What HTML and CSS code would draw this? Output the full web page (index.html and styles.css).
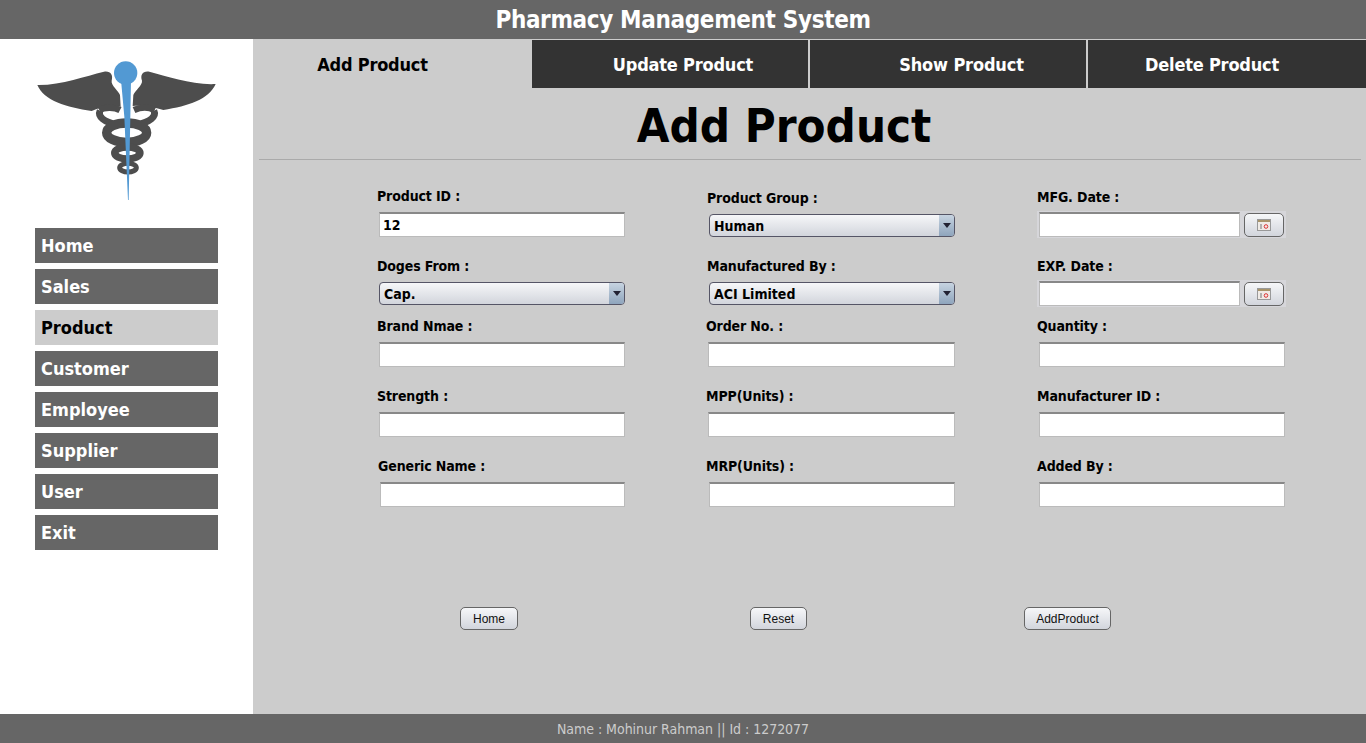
FILE: index.html
```html
<!DOCTYPE html>
<html lang="en-us">
  <head>
    <meta charset="utf-8">
    <meta name="viewport" content="width=device-width">
    <title>Pharmacy Management System</title>
    <link rel="stylesheet" href="styles.css">
  </head>
  <body>
    <header class="topbar">Pharmacy Management System</header>
    <div class="layout">
      <aside class="sidebar">
        <svg class="logo" viewBox="0 0 630 480" aria-hidden="true">
          <path class="dark" d="M52 105C125 106 195 78 252 65C272 62 280 75 275 92C272 106 296 122 300 135L302 170C270 164 240 172 215 183C140 172 72 152 52 105Z"/>
          <path class="dark" d="M587 102C520 106 440 78 388 65C368 62 360 75 366 92C368 106 344 122 340 135L338 168C370 164 405 172 430 180C505 168 567 148 587 102Z"/>
          <g class="coil">
            <path d="M240 182C232 200 252 216 290 224"/>
            <path d="M402 182C410 200 390 216 352 224"/>
            <path d="M238 180C255 170 285 172 300 180"/>
            <path d="M404 180C385 170 360 172 342 180"/>
            <ellipse cx="320" cy="248" rx="60" ry="29"/>
            <ellipse class="mid" cx="322" cy="309" rx="38" ry="18"/>
            <ellipse class="low" cx="324" cy="353" rx="25" ry="13"/>
          </g>
          <circle class="blue" cx="317" cy="69" r="35"/>
          <path class="blue" d="M303 90H333L331 200L326 450H324L313 200Z"/>
        </svg>
        <nav class="menu">
          <a class="menu-item">Home</a>
          <a class="menu-item">Sales</a>
          <a class="menu-item active">Product</a>
          <a class="menu-item">Customer</a>
          <a class="menu-item">Employee</a>
          <a class="menu-item">Supplier</a>
          <a class="menu-item">User</a>
          <a class="menu-item">Exit</a>
        </nav>
      </aside>
      <main class="content">
        <div class="tabs">
          <a class="tab active">Add Product</a>
          <a class="tab">Update Product</a>
          <a class="tab">Show Product</a>
          <a class="tab">Delete Product</a>
        </div>
        <h1 class="page-title">Add Product</h1>
        <form class="product-form">
          <div class="field">
            <label>Product ID :</label>
            <input class="text-input" type="text" value="12">
          </div>
          <div class="field drop-2">
            <label>Product Group :</label>
            <div class="combo">
              <select><option>Human</option></select>
              <span class="combo-arrow"></span>
            </div>
          </div>
          <div class="field drop-1">
            <label>MFG. Date :</label>
            <div class="date-field">
              <input class="text-input" type="text">
              <button class="date-btn" type="button"><svg viewBox="0 0 14 12"><rect x="0.5" y="0.5" width="13" height="11" fill="#f0ebe6" stroke="#999"/><rect x="1" y="1" width="12" height="2" fill="#a8946a"/><path d="M4 5v5" stroke="#777" fill="none"/><circle cx="9" cy="7.5" r="1.8" fill="none" stroke="#d33"/></svg></button>
            </div>
          </div>

          <div class="field">
            <label>Doges From :</label>
            <div class="combo">
              <select><option>Cap.</option></select>
              <span class="combo-arrow"></span>
            </div>
          </div>
          <div class="field">
            <label>Manufactured By :</label>
            <div class="combo">
              <select><option>ACI Limited</option></select>
              <span class="combo-arrow"></span>
            </div>
          </div>
          <div class="field">
            <label>EXP. Date :</label>
            <div class="date-field">
              <input class="text-input" type="text">
              <button class="date-btn" type="button"><svg viewBox="0 0 14 12"><rect x="0.5" y="0.5" width="13" height="11" fill="#f0ebe6" stroke="#999"/><rect x="1" y="1" width="12" height="2" fill="#a8946a"/><path d="M4 5v5" stroke="#777" fill="none"/><circle cx="9" cy="7.5" r="1.8" fill="none" stroke="#d33"/></svg></button>
            </div>
          </div>

          <div class="field"><label>Brand Nmae :</label><input class="text-input" type="text"></div>
          <div class="field"><label class="back">Order No. :</label><input class="text-input wide" type="text"></div>
          <div class="field"><label>Quantity :</label><input class="text-input" type="text"></div>

          <div class="field"><label>Strength :</label><input class="text-input" type="text"></div>
          <div class="field"><label class="back">MPP(Units) :</label><input class="text-input wide" type="text"></div>
          <div class="field"><label>Manufacturer ID :</label><input class="text-input" type="text"></div>

          <div class="field"><label class="forward">Generic Name :</label><input class="text-input inset" type="text"></div>
          <div class="field"><label class="back">MRP(Units) :</label><input class="text-input" type="text"></div>
          <div class="field"><label>Added By :</label><input class="text-input" type="text"></div>
        </form>
        <div class="actions">
          <button class="btn btn-home" type="button">Home</button>
          <button class="btn btn-reset" type="button">Reset</button>
          <button class="btn btn-add" type="button">AddProduct</button>
        </div>
      </main>
    </div>
    <footer class="footer">Name : Mohinur Rahman || Id : 1272077</footer>
  </body>
</html>
```

FILE: styles.css
```css
* {
    box-sizing: border-box;
}
html, body {
    height: 100%;
}
body {
    margin: 0;
    display: flex;
    flex-direction: column;
    overflow: hidden;
    font-family: "DejaVu Sans", Verdana, sans-serif;
    font-stretch: condensed;
    background: #fff;
    color: #000;
}
.topbar {
    height: 39px;
    flex: none;
    background: #666;
    color: #fff;
    font-size: 24px;
    font-weight: bold;
    letter-spacing: -0.35px;
    line-height: 41px;
    text-align: center;
}
.layout {
    flex: 1;
    display: flex;
    min-height: 0;
}
.sidebar {
    width: 253px;
    flex: none;
    padding: 11px 0 0 20px;
    background: #fff;
}
.logo {
    display: block;
    width: 210px;
    height: 160px;
}
.logo .dark {
    fill: #4d4d4d;
}
.logo .blue {
    fill: #5299d3;
}
.coil {
    fill: none;
    stroke: #4d4d4d;
    stroke-width: 28;
}
.coil path {
    stroke-width: 20;
}
.coil .mid {
    stroke-width: 22;
}
.coil .low {
    stroke-width: 15;
}
.menu {
    display: flex;
    flex-direction: column;
    gap: 6px;
    width: 183px;
    margin: 18px 0 0 15px;
}
.menu-item {
    height: 35px;
    padding-left: 6px;
    background: #666;
    color: #fff;
    font-size: 18px;
    font-weight: bold;
    line-height: 35px;
}
.menu-item.active {
    background: #ccc;
    color: #000;
}
.content {
    flex: 1;
    background: #ccc;
}
.tabs {
    display: flex;
    height: 49px;
    padding-top: 1px;
}
.tab {
    width: 276px;
    margin-left: 2px;
    background: #333;
    color: #fff;
    font-size: 18px;
    font-weight: bold;
    letter-spacing: -0.2px;
    line-height: 50px;
    text-align: center;
}
.tab:nth-child(2) {
    margin-left: 0;
    padding-left: 26px;
}
.tab.active {
    width: 279px;
    margin-left: 0;
    padding-right: 40px;
    background: #ccc;
    color: #000;
}
.tab:nth-child(3) {
    padding-left: 27px;
    letter-spacing: -0.15px;
}
.tab:nth-child(4) {
    width: 278px;
    padding-right: 30px;
}
.page-title {
    height: 72px;
    margin: 0 6px;
    padding-right: 52px;
    border-bottom: 1px solid #aaa;
    font-size: 47px;
    font-weight: bold;
    line-height: 76px;
    text-align: center;
}
.product-form {
    display: grid;
    grid-template-columns: repeat(3, 330px);
    grid-template-rows: 70px 60px 70px 70px 70px;
    margin: 28px 0 0 124px;
}
.field {
    display: flex;
    flex-direction: column;
    align-items: flex-start;
}
.drop-2 {
    padding-top: 2px;
}
.drop-1 {
    padding-top: 1px;
}
.field label {
    height: 16px;
    font-size: 14px;
    font-weight: bold;
    letter-spacing: -0.12px;
    line-height: 16px;
}
.field label.back {
    margin-left: -1px;
}
.field label.forward {
    margin-left: 1px;
}
.text-input {
    width: 246px;
    height: 25px;
    margin: 8px 0 0 2px;
    padding: 0 3px;
    border: 1px solid #bbb;
    border-top: 2px solid #888;
    border-radius: 0;
    background: #fff;
    font: bold 14px "DejaVu Sans", Verdana, sans-serif;
    font-stretch: condensed;
}
.text-input.wide {
    width: 247px;
    margin-left: 1px;
}
.text-input.inset {
    width: 245px;
    margin-left: 3px;
}
.combo {
    position: relative;
    width: 246px;
    height: 23px;
    margin: 8px 0 0 2px;
}
.combo select {
    width: 100%;
    height: 100%;
    padding: 0 20px 0 4px;
    border: 1px solid #556;
    border-radius: 4px;
    background: linear-gradient(#f6f7f9, #d2d5dc);
    appearance: none;
    font: bold 14px "DejaVu Sans", Verdana, sans-serif;
    font-stretch: condensed;
}
.combo-arrow {
    position: absolute;
    top: 1px;
    right: 1px;
    bottom: 1px;
    width: 15px;
    border-radius: 0 3px 3px 0;
    background: linear-gradient(#c6d3e0, #8fa5bd);
}
.combo-arrow:after {
    content: "";
    position: absolute;
    top: 8px;
    left: 4px;
    border: 4px solid transparent;
    border-top: 5px solid #223;
    border-bottom: 0;
}
.date-field {
    display: flex;
    align-items: center;
    gap: 4px;
    width: 249px;
    height: 27px;
    margin-top: 6px;
    padding: 0 2px;
    background: #d6d6da;
}
.date-field .text-input {
    width: 201px;
    height: 25px;
    margin: 0;
}
.date-btn {
    display: flex;
    align-items: center;
    justify-content: center;
    width: 40px;
    height: 24px;
    padding: 0;
    border: 1px solid #666;
    border-radius: 5px;
    background: linear-gradient(#f6f7f9, #d2d5dc);
}
.date-btn svg {
    width: 14px;
    height: 12px;
}
.actions {
    display: flex;
    margin: 79px 0 0 207px;
}
.btn {
    height: 23px;
    padding: 0;
    border: 1px solid #666;
    border-radius: 5px;
    background: linear-gradient(#f6f7f9, #d2d5dc);
    color: #111;
    font: 12px "Liberation Sans", Arial, sans-serif;
}
.btn-home {
    width: 58px;
}
.btn-reset {
    width: 57px;
    margin-left: 232px;
}
.btn-add {
    width: 87px;
    margin-left: 217px;
}
.footer {
    height: 29px;
    flex: none;
    background: #666;
    color: #ccc;
    font-size: 14px;
    letter-spacing: -0.03px;
    line-height: 30px;
    text-align: center;
}
```
